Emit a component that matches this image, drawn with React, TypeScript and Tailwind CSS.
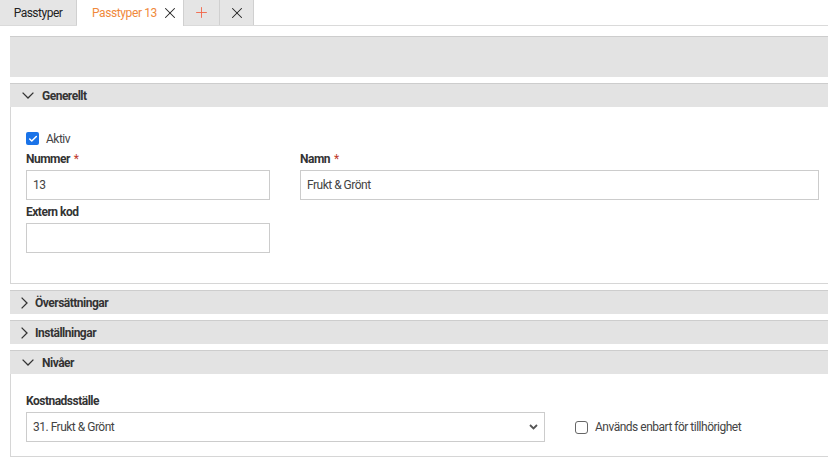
import React from 'react';
import { X, Plus, Check } from 'lucide-react';

const DownChevron = () => (
  <svg width="12" height="7" viewBox="0 0 12 7" className="ml-[12px] mr-[8px] shrink-0">
    <polyline points="0.6,0.6 6,6 11.4,0.6" fill="none" stroke="#333" strokeWidth="1.3" />
  </svg>
);

const RightChevron = () => (
  <svg width="7" height="12" viewBox="0 0 7 12" className="ml-[11px] mr-[7px] shrink-0">
    <polyline points="0.6,0.6 6,6 0.6,11.4" fill="none" stroke="#333" strokeWidth="1.3" />
  </svg>
);

const Section: React.FC<{ title: string; open?: boolean; children?: React.ReactNode }> = ({ title, open, children }) => (
  <div className="mt-[6px]">
    <div className="h-[24px] bg-[#e3e3e3] border-t border-[#cdcdcd] flex items-center">
      {open ? <DownChevron /> : <RightChevron />}
      <span className="text-[12px] font-bold text-[#333] tracking-[-0.5px]">{title}</span>
    </div>
    {open && <div className="bg-white border-l border-b border-[#d6d6d6]">{children}</div>}
  </div>
);

const Label: React.FC<{ text: string; required?: boolean }> = ({ text, required }) => (
  <div className="text-[12px] font-bold text-[#333] leading-[14px] tracking-[-0.5px] mb-[4px]">
    {text}
    {required && <span className="text-[#c0392b] font-normal ml-[4px]">*</span>}
  </div>
);

const Input: React.FC<{ value?: string }> = ({ value }) => (
  <div className="h-[30px] border border-[#cccccc] bg-white flex items-center px-[6px] text-[12px] text-[#444] tracking-[-0.5px]">
    {value}
  </div>
);

export default function App() {
  return (
    <div className="w-[828px] h-[459px] overflow-hidden bg-white font-['Roboto',sans-serif]">
      <div className="flex h-[26px] border-b border-[#dadada]">
        <div className="w-[77px] bg-[#e5e5e5] border-r border-[#d0d0d0] flex items-center justify-center text-[12px] text-[#222] tracking-[-0.5px]">
          Passtyper
        </div>
        <div className="w-[107px] bg-white border-r border-[#d0d0d0] flex items-center pl-[15px] gap-[7px] text-[12px] text-[#f0893b] tracking-[-0.4px] h-[26px]">
          Passtyper 13
          <X size={18} strokeWidth={1.4} className="text-[#222] -ml-[3px]" />
        </div>
        <div className="w-[36px] bg-[#e5e5e5] border-r border-[#d0d0d0] flex items-center justify-center">
          <Plus size={17} strokeWidth={1.3} className="text-[#f2674a]" />
        </div>
        <div className="w-[34px] bg-[#e5e5e5] border-r border-[#d0d0d0] flex items-center justify-center">
          <X size={18} strokeWidth={1.4} className="text-[#222]" />
        </div>
      </div>

      <div className="pl-[10px] pt-[10px]">
        <div className="h-[41px] bg-[#e3e3e3] border-t border-[#cdcdcd]" />

        <Section title="Generellt" open>
          <div className="pl-[15px] pr-[9px] pt-[25px] pb-[30px]">
            <div className="flex items-center gap-[7px] h-[13px] mb-[7px]">
              <div className="w-[13px] h-[13px] rounded-[2px] bg-[#1a73e8] flex items-center justify-center">
                <Check size={10} strokeWidth={3.5} className="text-white" />
              </div>
              <span className="text-[12px] text-[#444] tracking-[-0.5px]">Aktiv</span>
            </div>
            <div className="grid grid-cols-[244px_1fr] gap-x-[30px] gap-y-[5px]">
              <div>
                <Label text="Nummer" required />
                <Input value="13" />
              </div>
              <div>
                <Label text="Namn" required />
                <Input value="Frukt & Grönt" />
              </div>
              <div>
                <Label text="Extern kod" />
                <Input />
              </div>
            </div>
          </div>
        </Section>

        <Section title="Översättningar" />
        <Section title="Inställningar" />

        <Section title="Nivåer" open>
          <div className="pl-[15px] pr-[9px] pt-[20px] pb-[14px] flex items-end gap-[30px]">
            <div className="w-[519px]">
              <Label text="Kostnadsställe" />
              <div className="h-[30px] border border-[#cccccc] bg-white flex items-center justify-between pl-[6px] pr-[6px] text-[12px] text-[#444] tracking-[-0.5px]">
                31. Frukt &amp; Grönt
                <svg width="9" height="6" viewBox="0 0 9 6">
                  <polyline points="1,1 4.5,4.5 8,1" fill="none" stroke="#555" strokeWidth="1.8" />
                </svg>
              </div>
            </div>
            <div className="h-[30px] flex items-center gap-[7px]">
              <div className="w-[13px] h-[13px] rounded-[3px] border border-[#666] bg-white" />
              <span className="text-[12px] text-[#444] tracking-[-0.5px]">Används enbart för tillhörighet</span>
            </div>
          </div>
        </Section>
      </div>
    </div>
  );
}
